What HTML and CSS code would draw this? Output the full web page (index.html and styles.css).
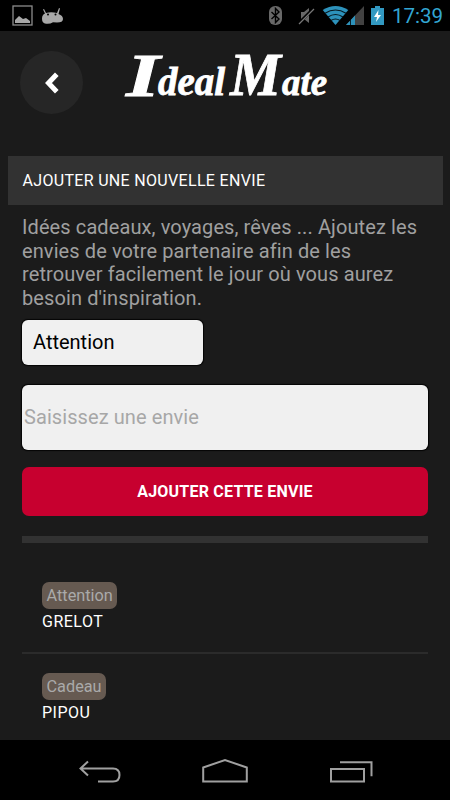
FILE: index.html
```html
<!DOCTYPE html>
<html lang="fr">
<head>
<meta charset="utf-8">
<title>IdealMate</title>
<link rel="stylesheet" href="styles.css">
</head>
<body>
<div class="status">
  <svg class="status-left" width="54" height="22" viewBox="12 4 54 22">
    <rect x="13" y="6" width="19" height="19" fill="none" stroke="#8c8c8c" stroke-width="1.3"/>
    <path d="M15 23v-3l4-4 4 3 3-1 4 3v2z" fill="#a8a8a8"/>
    <path d="M44 9l2 4q5-1.500 11 0l2-5 1 .6-1.500 5.400q4.500 1.500 4.500 5 0 3.500-6 3.500l-4-.3q-3 2-7 1.500-4-.5-4-5 0-4 3-5.200l-2-4z" fill="#a8a8a8"/>
    <circle cx="48" cy="14.500" r="1" fill="#000"/><circle cx="55.500" cy="14.500" r="1" fill="#000"/>
  </svg>
  <svg class="status-right" width="120" height="24" viewBox="266 3 120 24">
    <rect x="269" y="6" width="13" height="19" rx="6" fill="#686868"/>
    <path d="M271.500 12l7.500 7-3.500 3.500v-14l3.500 3.500-7.500 7" fill="none" stroke="#000" stroke-width="1.400"/>
    <path d="M301 12h3l5-4v15l-5-4h-3z" fill="#686868"/>
    <path d="M298 24l15-15" stroke="#000" stroke-width="3"/><path d="M299 24l15-15" stroke="#777" stroke-width="1.300"/>
    <path d="M335.500 25l-12.800-15q12.800-8 25.600 0z" fill="#2d92bb"/>
    <path d="M325 13.300q10.500-6.500 21 0M328 17q7.500-5 15 0M331 20.500q4.500-3 9 0" fill="none" stroke="#061820" stroke-width="1.100"/>
    <path d="M346 25l18-19v19z" fill="#424242"/><path d="M346 25l9-9.500v9.500z" fill="#2d92bb"/><path d="M350.500 20v5" stroke="#08202b"/>
    <path d="M371 8h4v-2h5v2h4v17h-13z" fill="#3299c2"/>
    <path d="M378.500 10l-4.500 7h3l-1 5 5-7h-3z" fill="#fff"/>
  </svg>
  <span class="clock">17:39</span>
</div>
<header class="header">
  <div class="back"><svg width="16" height="22" viewBox="0 0 16 22"><path d="M12.800 2.300L4.500 11l8.300 8.700" fill="none" stroke="#fff" stroke-width="5"/></svg></div>
  <svg class="logo" width="216" height="80" viewBox="118 33 216 80">
    <text x="126" y="96" font-size="62" textLength="34" lengthAdjust="spacingAndGlyphs">I</text>
    <text x="158" y="95" font-size="39" textLength="67" lengthAdjust="spacingAndGlyphs">deal</text>
    <text x="230" y="95" font-size="62" textLength="51" lengthAdjust="spacingAndGlyphs">M</text>
    <text x="282" y="95" font-size="37" textLength="45" lengthAdjust="spacingAndGlyphs">ate</text>
  </svg>
</header>
<main class="content">
  <h1 class="title"><span>AJOUTER UNE NOUVELLE ENVIE</span></h1>
  <div class="form">
    <p class="intro">Idées cadeaux, voyages, rêves ... Ajoutez les<br>envies de votre partenaire afin de les<br>retrouver facilement le jour où vous aurez<br>besoin d'inspiration.</p>
    <div class="select"><span>Attention</span></div>
    <div class="input"><span>Saisissez une envie</span></div>
    <div class="button"><span>AJOUTER CETTE ENVIE</span></div>
    <div class="rule"></div>
    <div class="item"><span class="tag">Attention</span><span class="name">GRELOT</span></div>
    <div class="item"><span class="tag">Cadeau</span><span class="name">PIPOU</span></div>
  </div>
</main>
<nav class="nav">
  <svg width="450" height="60" viewBox="0 740 450 60" fill="none" stroke="#a0a0a0" stroke-width="2">
    <path d="M88 761.500l-7.500 7 7.500 7M81 768.500h32q6.500 0 6.500 6.500t-6.500 6.500h-15"/>
    <path d="M203.200 781.500v-14l21.800-7.500 21.800 7.500v14z"/>
    <path d="M331 769h33v12.500h-33zM340 762.300h31.500v14"/>
  </svg>
</nav>
</body>
</html>
```
FILE: styles.css
```css
* { box-sizing: border-box; }
body { margin: 0; width: 450px; height: 800px; overflow: hidden; background: #1b1b1b; font-family: Roboto, sans-serif; font-variant-ligatures: none; display: flex; flex-direction: column; }
svg { display: block; flex: none; }
.status { height: 31px; flex: none; background: #000; display: flex; align-items: flex-start; padding: 3px 7px 0 12px; }
.status-left { margin-top: 1px; }
.status-right { margin-left: 200px; }
.clock { margin-left: auto; font-size: 20.5px; line-height: 27px; color: #33a6d3; }
.header { height: 125px; flex: none; display: flex; align-items: flex-start; padding: 2px 0 0 20px; }
.back { width: 63px; height: 63px; margin-top: 18px; border-radius: 50%; background: #262626; display: flex; align-items: center; justify-content: center; }
.logo { margin-left: 35px; fill: #fff; stroke: #fff; stroke-width: .8px; font-family: "Liberation Serif", serif; font-style: italic; font-weight: 700; }
.content { flex: 1; min-height: 0; padding: 0 7.5px; }
.title { margin: 0; height: 49px; padding-left: 15px; background: #323232; color: #fff; font-size: 16px; font-weight: 400; line-height: 49px; letter-spacing: .32px; }
.form { padding: 11px 14.500px 0 14.500px; }
.intro { margin: 0 0 9px; color: #a0a0a0; font-size: 20px; letter-spacing: .1px; line-height: 23.700px; white-space: nowrap; }
.select, .input { background: #f0f0f0; border-radius: 6px; box-shadow: 0 0 1px 0.5px #050505; }
.select { width: 181px; height: 45px; padding-left: 11px; font-size: 20px; line-height: 44px; color: #000; }
.input { height: 65px; margin-top: 20px; padding-left: 2px; font-size: 20px; letter-spacing: .08px; line-height: 64px; color: #a7a7a7; }
.button { height: 49px; margin-top: 17.500px; border-radius: 7px; background: #c7002f; color: #fff; text-align: center; font-size: 16px; letter-spacing: .22px; font-weight: 700; line-height: 49px; }
.rule { height: 7px; margin-top: 19.500px; background: #323232; }
.item { height: 91px; padding-left: 20px; display: flex; flex-direction: column; align-items: flex-start; }
.rule + .item { height: 111px; padding-top: 39px; border-bottom: 2px solid #2b2b2b; }
.item + .item { padding-top: 19px; }
.tag { height: 27px; padding: 0 4.500px; border-radius: 7px; background: #665a51; color: #aaa; font-size: 16.300px; line-height: 27px; }
.name { color: #fff; font-size: 16px; letter-spacing: .5px; line-height: 26px; }
.nav { height: 60px; flex: none; background: #000; }
```
